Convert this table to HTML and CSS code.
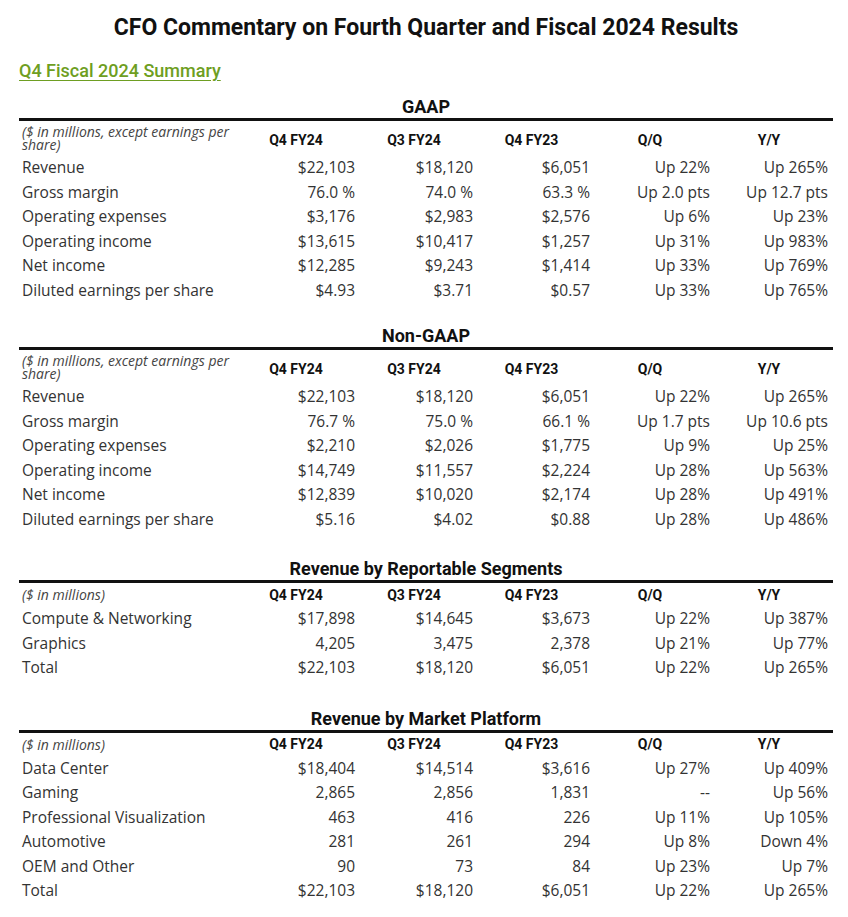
FILE: index.html
```html
<!DOCTYPE html>
<html lang="en">
<head>
<meta charset="utf-8">
<title>CFO Commentary</title>
<link rel="stylesheet" href="styles.css">
</head>
<body>
<main class="page">
  <h1 class="title">CFO Commentary on Fourth Quarter and Fiscal 2024 Results</h1>
  <a class="summary-link" href="#">Q4 Fiscal 2024 Summary</a>

  <section class="section first">
    <h2 class="section-title">GAAP</h2>
    <div class="table">
      <div class="row head two-line">
        <div class="label note">($ in millions, except earnings per share)</div>
        <div class="colh">Q4 FY24</div><div class="colh">Q3 FY24</div><div class="colh">Q4 FY23</div><div class="colh">Q/Q</div><div class="colh">Y/Y</div>
      </div>
      <div class="row"><div class="label">Revenue</div><div class="num">$22,103</div><div class="num">$18,120</div><div class="num">$6,051</div><div class="num">Up 22%</div><div class="num">Up 265%</div></div>
      <div class="row"><div class="label">Gross margin</div><div class="num">76.0 %</div><div class="num">74.0 %</div><div class="num">63.3 %</div><div class="num">Up 2.0 pts</div><div class="num">Up 12.7 pts</div></div>
      <div class="row"><div class="label">Operating expenses</div><div class="num">$3,176</div><div class="num">$2,983</div><div class="num">$2,576</div><div class="num">Up 6%</div><div class="num">Up 23%</div></div>
      <div class="row"><div class="label">Operating income</div><div class="num">$13,615</div><div class="num">$10,417</div><div class="num">$1,257</div><div class="num">Up 31%</div><div class="num">Up 983%</div></div>
      <div class="row"><div class="label">Net income</div><div class="num">$12,285</div><div class="num">$9,243</div><div class="num">$1,414</div><div class="num">Up 33%</div><div class="num">Up 769%</div></div>
      <div class="row"><div class="label">Diluted earnings per share</div><div class="num">$4.93</div><div class="num">$3.71</div><div class="num">$0.57</div><div class="num">Up 33%</div><div class="num">Up 765%</div></div>
    </div>
  </section>

  <section class="section tight">
    <h2 class="section-title">Non-GAAP</h2>
    <div class="table">
      <div class="row head two-line">
        <div class="label note">($ in millions, except earnings per share)</div>
        <div class="colh">Q4 FY24</div><div class="colh">Q3 FY24</div><div class="colh">Q4 FY23</div><div class="colh">Q/Q</div><div class="colh">Y/Y</div>
      </div>
      <div class="row"><div class="label">Revenue</div><div class="num">$22,103</div><div class="num">$18,120</div><div class="num">$6,051</div><div class="num">Up 22%</div><div class="num">Up 265%</div></div>
      <div class="row"><div class="label">Gross margin</div><div class="num">76.7 %</div><div class="num">75.0 %</div><div class="num">66.1 %</div><div class="num">Up 1.7 pts</div><div class="num">Up 10.6 pts</div></div>
      <div class="row"><div class="label">Operating expenses</div><div class="num">$2,210</div><div class="num">$2,026</div><div class="num">$1,775</div><div class="num">Up 9%</div><div class="num">Up 25%</div></div>
      <div class="row"><div class="label">Operating income</div><div class="num">$14,749</div><div class="num">$11,557</div><div class="num">$2,224</div><div class="num">Up 28%</div><div class="num">Up 563%</div></div>
      <div class="row"><div class="label">Net income</div><div class="num">$12,839</div><div class="num">$10,020</div><div class="num">$2,174</div><div class="num">Up 28%</div><div class="num">Up 491%</div></div>
      <div class="row"><div class="label">Diluted earnings per share</div><div class="num">$5.16</div><div class="num">$4.02</div><div class="num">$0.88</div><div class="num">Up 28%</div><div class="num">Up 486%</div></div>
    </div>
  </section>

  <section class="section segments">
    <h2 class="section-title">Revenue by Reportable Segments</h2>
    <div class="table">
      <div class="row head">
        <div class="label note">($ in millions)</div>
        <div class="colh">Q4 FY24</div><div class="colh">Q3 FY24</div><div class="colh">Q4 FY23</div><div class="colh">Q/Q</div><div class="colh">Y/Y</div>
      </div>
      <div class="row"><div class="label">Compute &amp; Networking</div><div class="num">$17,898</div><div class="num">$14,645</div><div class="num">$3,673</div><div class="num">Up 22%</div><div class="num">Up 387%</div></div>
      <div class="row"><div class="label">Graphics</div><div class="num">4,205</div><div class="num">3,475</div><div class="num">2,378</div><div class="num">Up 21%</div><div class="num">Up 77%</div></div>
      <div class="row"><div class="label">Total</div><div class="num">$22,103</div><div class="num">$18,120</div><div class="num">$6,051</div><div class="num">Up 22%</div><div class="num">Up 265%</div></div>
    </div>
  </section>

  <section class="section">
    <h2 class="section-title">Revenue by Market Platform</h2>
    <div class="table">
      <div class="row head">
        <div class="label note">($ in millions)</div>
        <div class="colh">Q4 FY24</div><div class="colh">Q3 FY24</div><div class="colh">Q4 FY23</div><div class="colh">Q/Q</div><div class="colh">Y/Y</div>
      </div>
      <div class="row"><div class="label">Data Center</div><div class="num">$18,404</div><div class="num">$14,514</div><div class="num">$3,616</div><div class="num">Up 27%</div><div class="num">Up 409%</div></div>
      <div class="row"><div class="label">Gaming</div><div class="num">2,865</div><div class="num">2,856</div><div class="num">1,831</div><div class="num">--</div><div class="num">Up 56%</div></div>
      <div class="row"><div class="label">Professional Visualization</div><div class="num">463</div><div class="num">416</div><div class="num">226</div><div class="num">Up 11%</div><div class="num">Up 105%</div></div>
      <div class="row"><div class="label">Automotive</div><div class="num">281</div><div class="num">261</div><div class="num">294</div><div class="num">Up 8%</div><div class="num">Down 4%</div></div>
      <div class="row"><div class="label">OEM and Other</div><div class="num">90</div><div class="num">73</div><div class="num">84</div><div class="num">Up 23%</div><div class="num">Up 7%</div></div>
      <div class="row"><div class="label">Total</div><div class="num">$22,103</div><div class="num">$18,120</div><div class="num">$6,051</div><div class="num">Up 22%</div><div class="num">Up 265%</div></div>
    </div>
  </section>
</main>
</body>
</html>
```

FILE: styles.css
```css
html, body {
  margin: 0;
  padding: 0;
  background: #ffffff;
}

body {
  font-family: "Open Sans", "DejaVu Sans", sans-serif;
  color: #333333;
}

.page {
  display: flex;
  flex-direction: column;
  padding: 14px 15px 0 19px;
}

.title {
  margin: 0;
  text-align: center;
  font-family: Roboto, "Liberation Sans", sans-serif;
  font-weight: 700;
  font-size: 23px;
  line-height: 28px;
  color: #111111;
}

.summary-link {
  align-self: flex-start;
  margin: 19px 0 0 0;
  font-family: Roboto, "Liberation Sans", sans-serif;
  font-weight: 500;
  font-size: 18px;
  line-height: 20px;
  color: #6e9e22;
  text-decoration: underline;
  text-underline-offset: 3px;
}

.section {
  display: flex;
  flex-direction: column;
  margin-top: 28px;
}

.section.first {
  margin-top: 15px;
}

.section.tight {
  margin-top: 23px;
}

.section.segments {
  margin-top: 27px;
}

.section-title {
  margin: 0;
  text-align: center;
  font-family: Roboto, "Liberation Sans", sans-serif;
  font-weight: 700;
  font-size: 18px;
  line-height: 22px;
  color: #111111;
}

.table {
  border-top: 3px solid #111111;
  display: flex;
  flex-direction: column;
}

.row {
  display: grid;
  grid-template-columns: 218px 118px 118px 117px 120px 118px;
  align-items: center;
  height: 24.5px;
  font-size: 15.5px;
}

.row.head {
  height: 23px;
}

.row.head.two-line {
  height: 34px;
}

.label {
  padding-left: 3px;
  white-space: nowrap;
  color: #333333;
}

.note {
  font-style: italic;
  font-size: 14px;
  line-height: 13px;
  white-space: normal;
  color: #444444;
}

.two-line .note {
  align-self: start;
  padding-top: 4px;
}

.colh {
  text-align: center;
  font-family: Roboto, "Liberation Sans", sans-serif;
  font-weight: 700;
  font-size: 14px;
  color: #111111;
}

.two-line .colh {
  padding-top: 4px;
}

.num {
  text-align: right;
  white-space: nowrap;
  color: #333333;
}
```
